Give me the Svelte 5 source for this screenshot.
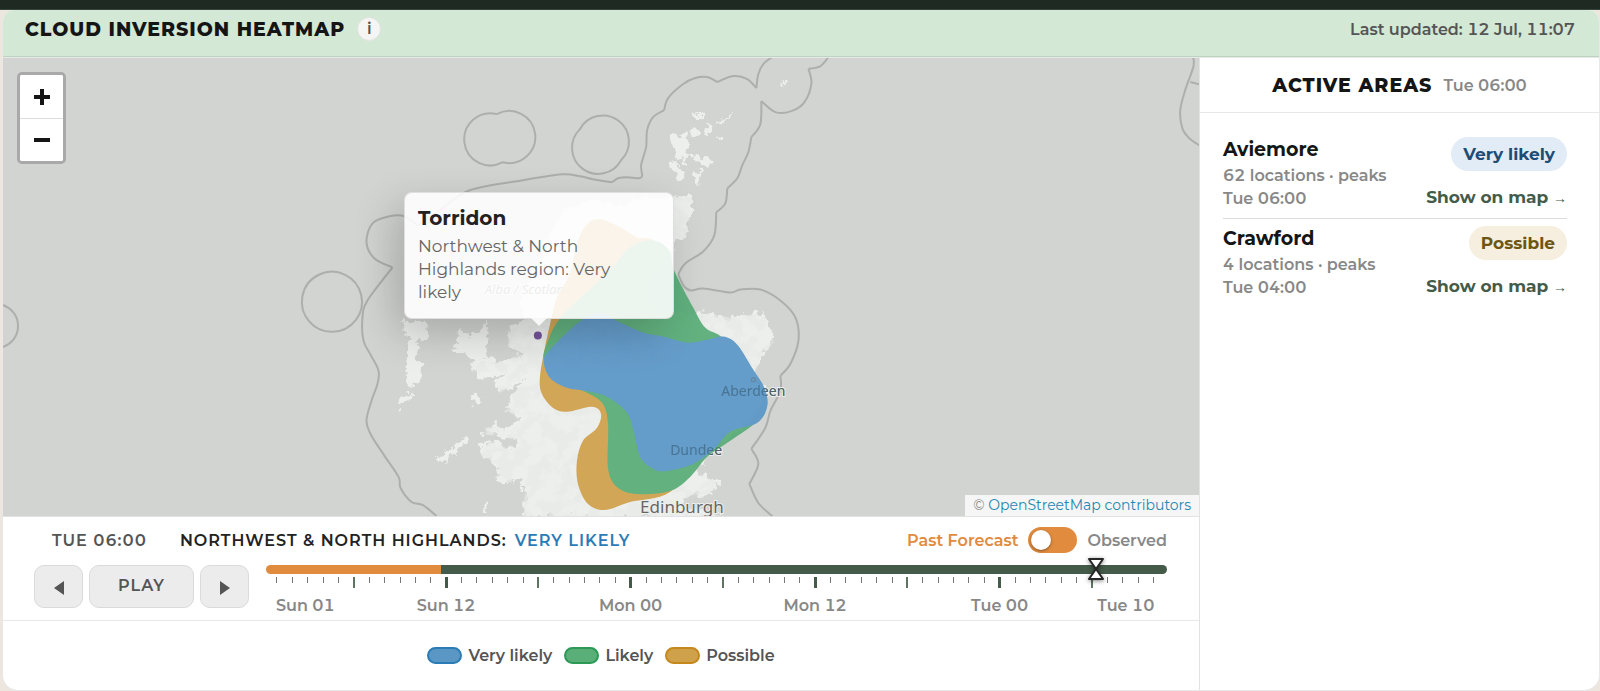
<script lang="ts">
	type Point = [number, number];

	const areas = [
		{ name: 'Aviemore', detail: '62 locations · peaks', time: 'Tue 06:00', level: 'Very likely', tone: 'very' },
		{ name: 'Crawford', detail: '4 locations · peaks', time: 'Tue 04:00', level: 'Possible', tone: 'possible' }
	];

	const legend = [
		{ label: 'Very likely', tone: 'very' },
		{ label: 'Likely', tone: 'likely' },
		{ label: 'Possible', tone: 'possible' }
	];

	// one tick for each forecast hour, starting on Sunday at 01:00
	const days = ['Sun', 'Mon', 'Tue'];
	const ticks = Array.from({ length: 58 }, (_, i) => {
		const hour = (i + 1) % 24;
		const edge = i === 0 || i === 57;
		const day = days[Math.floor((i + 1) / 24)];
		return {
			id: i,
			major: hour % 12 === 0,
			mid: hour % 12 === 6,
			first: i === 0,
			last: i === 57,
			label: edge || hour % 12 === 0 ? `${day} ${String(hour).padStart(2, '0')}` : ''
		};
	});

	let hour = $state(53);
	let observed = $state(false);

	// Catmull-Rom through the points, written out as cubic curves
	function smooth(points: Point[], closed = false) {
		const n = points.length;
		const at = (i: number) => (closed ? points[(i + n) % n] : points[Math.max(0, Math.min(n - 1, i))]);
		let d = `M${points[0][0]} ${points[0][1]}`;
		for (let i = 0; i < (closed ? n : n - 1); i++) {
			const [a, b, c, e] = [at(i - 1), at(i), at(i + 1), at(i + 2)];
			d += `C${b[0] + (c[0] - a[0]) / 6} ${b[1] + (c[1] - a[1]) / 6} ${c[0] - (e[0] - b[0]) / 6} ${c[1] - (e[1] - b[1]) / 6} ${c[0]} ${c[1]}`;
		}
		return closed ? d + 'Z' : d;
	}

	const possible: Point[] = [
		[551, 320], [557, 297], [570, 273], [577, 243], [587, 224], [600, 219], [620, 227], [637, 237], [653, 240],
		[660, 262], [680, 310], [705, 345], [725, 400], [708, 450], [670, 491], [630, 501], [605, 509], [588, 503],
		[578, 483], [577, 460], [583, 440], [597, 427], [601, 413], [592, 406], [567, 411], [553, 407], [542, 393],
		[540, 377], [545, 347]
	];
	const likely: Point[] = [
		[544, 360], [549, 338], [560, 318], [583, 295], [610, 270], [630, 247], [653, 240], [669, 250], [674, 270],
		[693, 307], [705, 327], [722, 337], [740, 360], [760, 390], [765, 411], [753, 424], [727, 442], [707, 456],
		[690, 476], [670, 490], [637, 493], [617, 486], [608, 467], [608, 423], [602, 402], [583, 390], [560, 380]
	];
	const veryLikely: Point[] = [
		[544, 360], [550, 377], [567, 387], [585, 390], [607, 396], [627, 412], [634, 432], [640, 456], [653, 468],
		[667, 470], [693, 463], [713, 449], [730, 431], [757, 422], [767, 405], [764, 387], [753, 369], [737, 344],
		[723, 336], [708, 339], [687, 342], [663, 336], [643, 332], [620, 322], [600, 313], [580, 321], [552, 347]
	];

	const waters = [
		smooth([[437, 515], [423, 504], [412, 501], [401, 487], [399, 476], [385, 455], [372, 435], [367, 420], [372, 400], [378, 383], [379, 370], [371, 354], [364, 340], [363, 317], [368, 300], [393, 267]]),
		smooth([[393, 267], [375, 258], [367, 242], [373, 223], [390, 216], [405, 216], [418, 225]]),
		smooth([[418, 225], [440, 210], [470, 190], [523, 180], [562, 174], [580, 176], [593, 179], [612, 182]]),
		smooth([[612, 182], [618, 178], [627, 177], [637, 178], [642, 176], [641, 165], [646, 147], [647, 130], [653, 117], [664, 110]]),
		smooth([[664, 110], [668, 98], [683, 84], [695, 78], [707, 77], [717, 82]]),
		smooth([[717, 82], [733, 76], [747, 79], [756, 88]]),
		smooth([[756, 88], [758, 74], [763, 64], [772, 57]]),
		smooth([[828, 57], [820, 66], [808, 69]]),
		smooth([[808, 69], [811, 83], [804, 102], [791, 111], [775, 112], [761, 101]]),
		smooth([[761, 101], [760, 124], [751, 137]]),
		smooth([[751, 137], [748, 152], [742, 165], [737, 178], [727, 188]]),
		smooth([[727, 188], [725, 203], [716, 212]]),
		smooth([[716, 212], [714, 235], [703, 251], [685, 263], [678, 274]]),
		smooth([[678, 274], [684, 286], [691, 290], [703, 288], [730, 292], [740, 289], [760, 289], [780, 300], [795, 317], [798, 340], [790, 363], [780, 375]]),
		smooth([[780, 375], [780, 390], [770, 410], [765, 427], [751, 448]]),
		smooth([[751, 448], [758, 463], [749, 483]]),
		smooth([[749, 483], [758, 502], [773, 516]]),
		'M303 296A30 30 0 0 1 320 274A30 30 0 1 1 303 296',
		'M580 129A26 26 0 1 1 621 160A26 26 0 1 1 580 129',
		'M497 114A26 26 0 1 0 503 162A26 26 0 1 0 497 114',
		'M2 304A22 22 0 0 1 2 347',
		smooth([[1192, 57], [1192, 67], [1184, 90], [1179, 110], [1181, 128], [1188, 138], [1201, 147]]),
		'M1189 82L1201 85'
	];

	const mainland =
		'M568 208L590 200L620 205L640 199L673 197L692 197L690 217L686 237L675 240L664 258L650 275L645 292L655 310L700 313L730 317L760 313L772 330L773 342L760 357L755 372L764 390L755 412L738 428L718 442L704 457L692 466L702 475L720 482L710 493L690 495L678 502L700 512L725 516L524 516L525 490L519 478L510 482L495 477L500 465L482 457L480 446L495 440L510 450L518 447L520 440L505 436L486 434L485 427L510 424L520 417L507 410L512 395L524 380L510 386L500 392L497 381L507 370L493 378L478 376L470 362L484 360L498 362L513 356L526 354L509 346L508 330L525 318L520 300L530 280L545 250L555 225Z';
	const islands = [
		'M400 322L424 319L428 328L424 338L416 347L421 360L419 384L408 384L406 362L411 342L405 330Z',
		'M400 395L412 390L407 401L398 407Z',
		'M458 325L473 340L487 320L490 340L486 353L500 362L497 370L478 366L470 357L450 346L460 344Z',
		'M471 394L482 392L483 401L476 404Z',
		'M436 457L447 451L465 436L469 438L460 448L442 463Z',
		'M483 510L489 499L490 509L485 516Z',
		'M672 137L682 133L690 140L687 150L693 158L685 162L676 157L671 147Z',
		'M692 155L705 158L713 160L706 166L695 161Z',
		'M691 112L698 110L704 120L696 117Z',
		'M714 126L727 115L733 112L722 124Z',
		'M693 174L700 168L699 185L695 181Z',
		'M667 163L676 160L685 178L678 180Z',
		'M715 136L723 133L724 142L717 140Z',
		'M687 128L698 130L697 136L688 134Z',
		'M705 122L711 127L709 133L706 132Z',
		'M782 82L785 81L784 87Z'
	];
</script>

<div class="page">
	<div class="topbar"></div>
	<main class="card">
		<header class="card-header">
			<h1>Cloud inversion heatmap</h1>
			<button class="info" aria-label="About this map">i</button>
			<p class="updated">Last updated: 12 Jul, 11:07</p>
		</header>

		<div class="content">
			<section class="main">
				<div class="map">
					<svg class="tiles" viewBox="3 58 1196 457" preserveAspectRatio="xMidYMid slice" aria-hidden="true">
						<defs>
							<filter id="coast" x="-5%" y="-5%" width="110%" height="110%">
								<feTurbulence type="fractalNoise" baseFrequency="0.13" numOctaves="3" seed="4" result="noise" />
								<feDisplacementMap in="SourceGraphic" in2="noise" scale="15" xChannelSelector="R" yChannelSelector="G" />
							</filter>
							<filter id="relief" x="0" y="0" width="100%" height="100%">
								<feTurbulence type="fractalNoise" baseFrequency="0.07" numOctaves="4" seed="9" result="noise" />
								<feColorMatrix in="noise" type="matrix" values="0 0 0 0 0.8  0 0 0 0 0.82  0 0 0 0 0.8  7 0 0 0 -3" result="tint" />
								<feComposite in="tint" in2="SourceAlpha" operator="in" />
							</filter>
						</defs>
						<rect x="3" y="58" width="1196" height="457" fill="#d2d4d1" />
						<g filter="url(#coast)">
							<g class="land">
								<path d={mainland} />
								{#each islands as d}
									<path {d} />
								{/each}
							</g>
						</g>
						<g opacity="0.7" filter="url(#relief)">
							<path d={mainland} />
						</g>
						<g class="waters">
							{#each waters as d}
								<path {d} />
							{/each}
						</g>
						<g class="places">
							<text x="485" y="293" class="country">Alba / Scotland</text>
							<text x="721" y="395">Aberdeen</text>
							<text x="670" y="454">Dundee</text>
							<circle cx="753" cy="379" r="2" />
							<text x="640" y="512" class="city">Edinburgh</text>
						</g>
						<g class="heat">
							<path d={smooth(possible, true)} fill="#d0a14b" />
							<path d={smooth(likely, true)} fill="#58ad77" />
							<path d={smooth(veryLikely, true)} fill="#5b97c8" />
						</g>
						<g class="places faint">
							<text x="721" y="395">Aberdeen</text>
							<text x="670" y="454">Dundee</text>
							<circle cx="753" cy="379" r="2" />
						</g>
						<circle cx="538" cy="335" r="4" fill="#74539c" />
					</svg>

					<div class="zoom">
						<button aria-label="Zoom in"><svg viewBox="0 0 16 16"><path d="M0 8H16M8 0V16" /></svg></button>
						<button aria-label="Zoom out"><svg viewBox="0 0 16 16"><path d="M0 8H16" /></svg></button>
					</div>

					<div class="popup">
						<h3>Torridon</h3>
						<p>Northwest &amp; North Highlands region: Very likely</p>
					</div>

					<p class="credit">© <a href="#osm">OpenStreetMap contributors</a></p>
				</div>

				<div class="controls">
					<div class="status">
						<span class="now">Tue 06:00</span>
						<span class="region">Northwest &amp; North Highlands:</span>
						<span class="level">Very likely</span>
						<label class="mode">
							<span class="past">Past Forecast</span>
							<input type="checkbox" bind:checked={observed} />
							<span>Observed</span>
						</label>
					</div>
					<div class="player">
						<div class="buttons">
							<button class="step" aria-label="Previous hour"><svg viewBox="0 0 10 14"><path d="M10 0V14L0 7Z" /></svg></button>
							<button class="play">Play</button>
							<button class="step" aria-label="Next hour"><svg viewBox="0 0 10 14"><path d="M0 0V14L10 7Z" /></svg></button>
						</div>
						<div class="timeline">
							<div class="slider">
								<input type="range" min="0" max="57" bind:value={hour} aria-label="Forecast hour" />
								<div class="rail">
									<svg class="marker" style="left: {(hour / 57) * 100}%" viewBox="0 0 18 24" aria-hidden="true">
										<path d="M2 2H16L2 22H16Z" />
									</svg>
								</div>
							</div>
							<div class="ticks">
								{#each ticks as tick (tick.id)}
									<div class="tick" class:first={tick.first} class:last={tick.last}>
										<i class:major={tick.major} class:mid={tick.mid}></i>
										{#if tick.label}<span>{tick.label}</span>{/if}
									</div>
								{/each}
							</div>
						</div>
					</div>
				</div>

				<ul class="legend">
					{#each legend as item}
						<li><i class={item.tone}></i>{item.label}</li>
					{/each}
				</ul>
			</section>

			<aside class="side">
				<div class="side-header">
					<h2>Active areas</h2>
					<span>Tue 06:00</span>
				</div>
				<ul class="areas">
					{#each areas as area (area.name)}
						<li>
							<div class="about">
								<h3>{area.name}</h3>
								<p>{area.detail}</p>
								<p>{area.time}</p>
							</div>
							<div class="actions">
								<span class="badge {area.tone}">{area.level}</span>
								<a href="#{area.name}">Show on map <small>→</small></a>
							</div>
						</li>
					{/each}
				</ul>
			</aside>
		</div>
	</main>
</div>

<style>
:global(body) {
	background: #ede6de;
}
.page {
	min-height: 100vh;
	display: flex;
	flex-direction: column;
	font-family: Montserrat, Inter, sans-serif;
	font-size: 16px;
	font-weight: 600;
	font-variant-numeric: tabular-nums;
	line-height: 23px;
	color: #888;
}
.page * {
	box-sizing: border-box;
}
h1, h2, h3, p, ul {
	margin: 0;
	padding: 0;
}
ul {
	list-style: none;
}
button {
	padding: 0;
	font: inherit;
	cursor: pointer;
}
a {
	text-decoration: none;
}
.topbar {
	height: 10px;
	background: #1f2a23;
	border-bottom: 1px solid #36453b;
}
.card {
	flex: 1;
	display: flex;
	flex-direction: column;
	margin-left: 2px;
	border: 1px solid #e8e8e8;
	border-top: 0;
	border-radius: 12px 12px 16px 16px;
	background: #fff;
	overflow: hidden;
}
.card-header {
	display: flex;
	align-items: center;
	height: 47px;
	padding: 0 24px 8px 22px;
	background: #d3e8d5;
	border-bottom: 1px solid #bdd4c0;
}
h1, h2 {
	font-size: 19px;
	font-weight: 800;
	letter-spacing: 1px;
	text-transform: uppercase;
	color: #151515;
}
.info {
	width: 24px;
	height: 24px;
	margin-left: 12px;
	border: 1px solid #e2e2e2;
	border-radius: 50%;
	background: #f5f5f3;
	line-height: 20px;
	color: #555;
}
.updated {
	margin-left: auto;
	color: #555;
}
.content {
	flex: 1;
	display: flex;
	border-top: 1px solid #e8e8e8;
}
.main {
	flex: 1;
	display: flex;
	flex-direction: column;
	min-width: 0;
}
.map {
	flex: 1;
	position: relative;
	min-height: 320px;
	overflow: hidden;
	background: #d2d4d1;
}
.tiles {
	position: absolute;
	width: 100%;
	height: 100%;
}
.land {
	fill: #edefed;
}
.waters {
	fill: none;
	stroke: #adafac;
	stroke-width: 2;
}
.heat {
	opacity: 0.93;
}
.places {
	font-family: "Noto Sans", sans-serif;
	font-size: 14px;
	font-weight: 400;
	fill: #666;
	stroke: #edefed;
	stroke-width: 2;
	paint-order: stroke;
}
.places circle {
	fill: none;
	stroke: #777;
	stroke-width: 1;
}
.places .country {
	font-size: 13px;
	font-style: italic;
}
.places .city {
	font-size: 17px;
}
.faint {
	fill: #3e6075;
	stroke: none;
	opacity: 0.6;
}
.zoom {
	position: absolute;
	top: 14px;
	left: 14px;
	border: 3px solid #a8a9a8;
	border-radius: 5px;
	background: #fff;
	overflow: hidden;
}
.zoom button {
	display: flex;
	align-items: center;
	justify-content: center;
	width: 43px;
	height: 43px;
	border: 0;
	background: #fff;
}
.zoom button + button {
	border-top: 1px solid #ddd;
}
.zoom svg {
	width: 16px;
	height: 16px;
	stroke: #151515;
	stroke-width: 4;
}
.popup {
	position: absolute;
	top: 134px;
	left: 401px;
	width: 270px;
	height: 127px;
	padding: 14px 42px 12px 13px;
	border: 1px solid rgba(220, 220, 220, 0.9);
	border-radius: 8px;
	background: rgba(255, 255, 255, 0.88);
	box-shadow: -10px 14px 40px rgba(0, 0, 0, 0.2);
	font-size: 17px;
	font-weight: 400;
	color: #666;
}
.popup::after {
	content: "";
	position: absolute;
	top: 100%;
	left: 126px;
	border: 8px solid transparent;
	border-top-color: #f7f7f7;
	border-bottom: 0;
}
.popup h3 {
	margin-bottom: 5px;
	font-size: 20px;
	font-weight: 700;
	color: #222;
}
.credit {
	position: absolute;
	right: 0;
	bottom: 0;
	padding: 0 8px;
	background: #f6f6f6;
	font-size: 14px;
	font-weight: 400;
	line-height: 21px;
}
.credit a {
	color: #2488b4;
}
.controls {
	padding: 9px 32px 3px 31px;
	border-top: 1px solid #e2e2e2;
}
.status {
	display: flex;
	align-items: center;
	height: 28px;
	padding-left: 18px;
	text-transform: uppercase;
}
.now {
	margin-right: 33px;
	letter-spacing: 1px;
	color: #555;
}
.region {
	margin-right: 8px;
	letter-spacing: 1px;
	color: #222;
}
.level {
	letter-spacing: 1px;
	color: #2b7bb6;
}
.mode {
	display: flex;
	align-items: center;
	gap: 10px;
	margin-left: auto;
	text-transform: none;
}
.past {
	color: #e08b3e;
}
.mode input {
	appearance: none;
	width: 49px;
	height: 26px;
	margin: 0;
	padding: 3px;
	border-radius: 13px;
	background: #e08b3e;
}
.mode input::before {
	content: "";
	display: block;
	width: 20px;
	height: 20px;
	border-radius: 50%;
	background: #fff;
	box-shadow: 0 1px 3px rgba(0, 0, 0, 0.4);
}
.mode input:checked::before {
	margin-left: auto;
}
.player {
	display: flex;
	gap: 17px;
	padding-top: 11px;
}
.buttons {
	display: flex;
	gap: 6px;
}
.buttons button {
	height: 43px;
	border: 1px solid #dadada;
	border-radius: 10px;
	background: #ececec;
	color: #555;
}
.buttons .step {
	width: 49px;
}
.buttons .play {
	width: 105px;
	padding-bottom: 2px;
	letter-spacing: 1px;
	text-transform: uppercase;
}
.step svg {
	width: 10px;
	height: 14px;
	fill: #555;
	vertical-align: middle;
}
.timeline {
	flex: 1;
}
.slider {
	position: relative;
	height: 9px;
}
.slider input {
	display: block;
	appearance: none;
	width: 100%;
	height: 9px;
	margin: 0;
	border-radius: 5px;
	background: linear-gradient(90deg, #e08b3e 19.4%, #445b49 19.4%);
}
.slider input::-webkit-slider-thumb {
	appearance: none;
	width: 24px;
	height: 24px;
	background: transparent;
}
.rail {
	position: absolute;
	inset: 0 9px 0 12px;
	pointer-events: none;
}
.marker {
	position: absolute;
	top: -8px;
	width: 18px;
	height: 24px;
	margin-left: -9px;
	fill: #fff;
	stroke: #262626;
	stroke-width: 2;
	stroke-linejoin: round;
	filter: drop-shadow(0 1px 2px rgba(0, 0, 0, 0.5));
}
.ticks {
	display: flex;
	justify-content: space-between;
	padding: 3px 12px 0 10px;
}
.tick {
	display: flex;
	flex-direction: column;
	align-items: center;
	width: 2px;
	height: 40px;
	white-space: nowrap;
}
.tick i {
	width: 1px;
	height: 6px;
	background: #777;
}
.tick i.mid {
	width: 2px;
	height: 11px;
	background: #5d7562;
}
.tick i.major {
	width: 3px;
	height: 11px;
	background: #445b49;
}
.tick span {
	margin-top: auto;
}
.tick.first {
	align-items: flex-start;
}
.tick.last {
	align-items: flex-end;
}
.legend {
	display: flex;
	align-items: center;
	justify-content: center;
	gap: 12px;
	height: 70px;
	border-top: 1px solid #e8e8e8;
	color: #555;
}
.legend li {
	display: flex;
	align-items: center;
	gap: 6px;
}
.legend i {
	width: 35px;
	height: 17px;
	border: 2px solid;
	border-radius: 9px;
}
.legend .very {
	border-color: #2b7bb6;
	background: #5b97c5;
}
.legend .likely {
	border-color: #2c9a56;
	background: #5aae78;
}
.legend .possible {
	border-color: #c5881c;
	background: #d0a14b;
}
.side {
	width: 400px;
	border-left: 1px solid #e2e2e2;
}
.side-header {
	display: flex;
	align-items: center;
	justify-content: center;
	gap: 11px;
	height: 55px;
	border-bottom: 1px solid #e8e8e8;
}
.areas {
	padding: 17px 32px 0 23px;
}
.areas li {
	display: flex;
	justify-content: space-between;
	padding: 7px 0 8px;
}
.areas li + li {
	border-top: 1px solid #ddd;
}
.about h3 {
	margin: 1px 0 3px;
	font-size: 19px;
	font-weight: 700;
	color: #151515;
}
.actions {
	display: flex;
	flex-direction: column;
	align-items: flex-end;
	justify-content: space-between;
	font-size: 17px;
	font-weight: 700;
}
.badge {
	padding: 6px 12px;
	border-radius: 17px;
	line-height: 22px;
}
.badge.very {
	background: #e2ecf6;
	color: #1d4d75;
}
.badge.possible {
	background: #f6eedf;
	color: #6d5612;
}
.actions a {
	color: #445b49;
}
.actions small {
	font-family: "Liberation Sans", sans-serif;
	font-size: 14px;
	font-weight: 400;
}
</style>
